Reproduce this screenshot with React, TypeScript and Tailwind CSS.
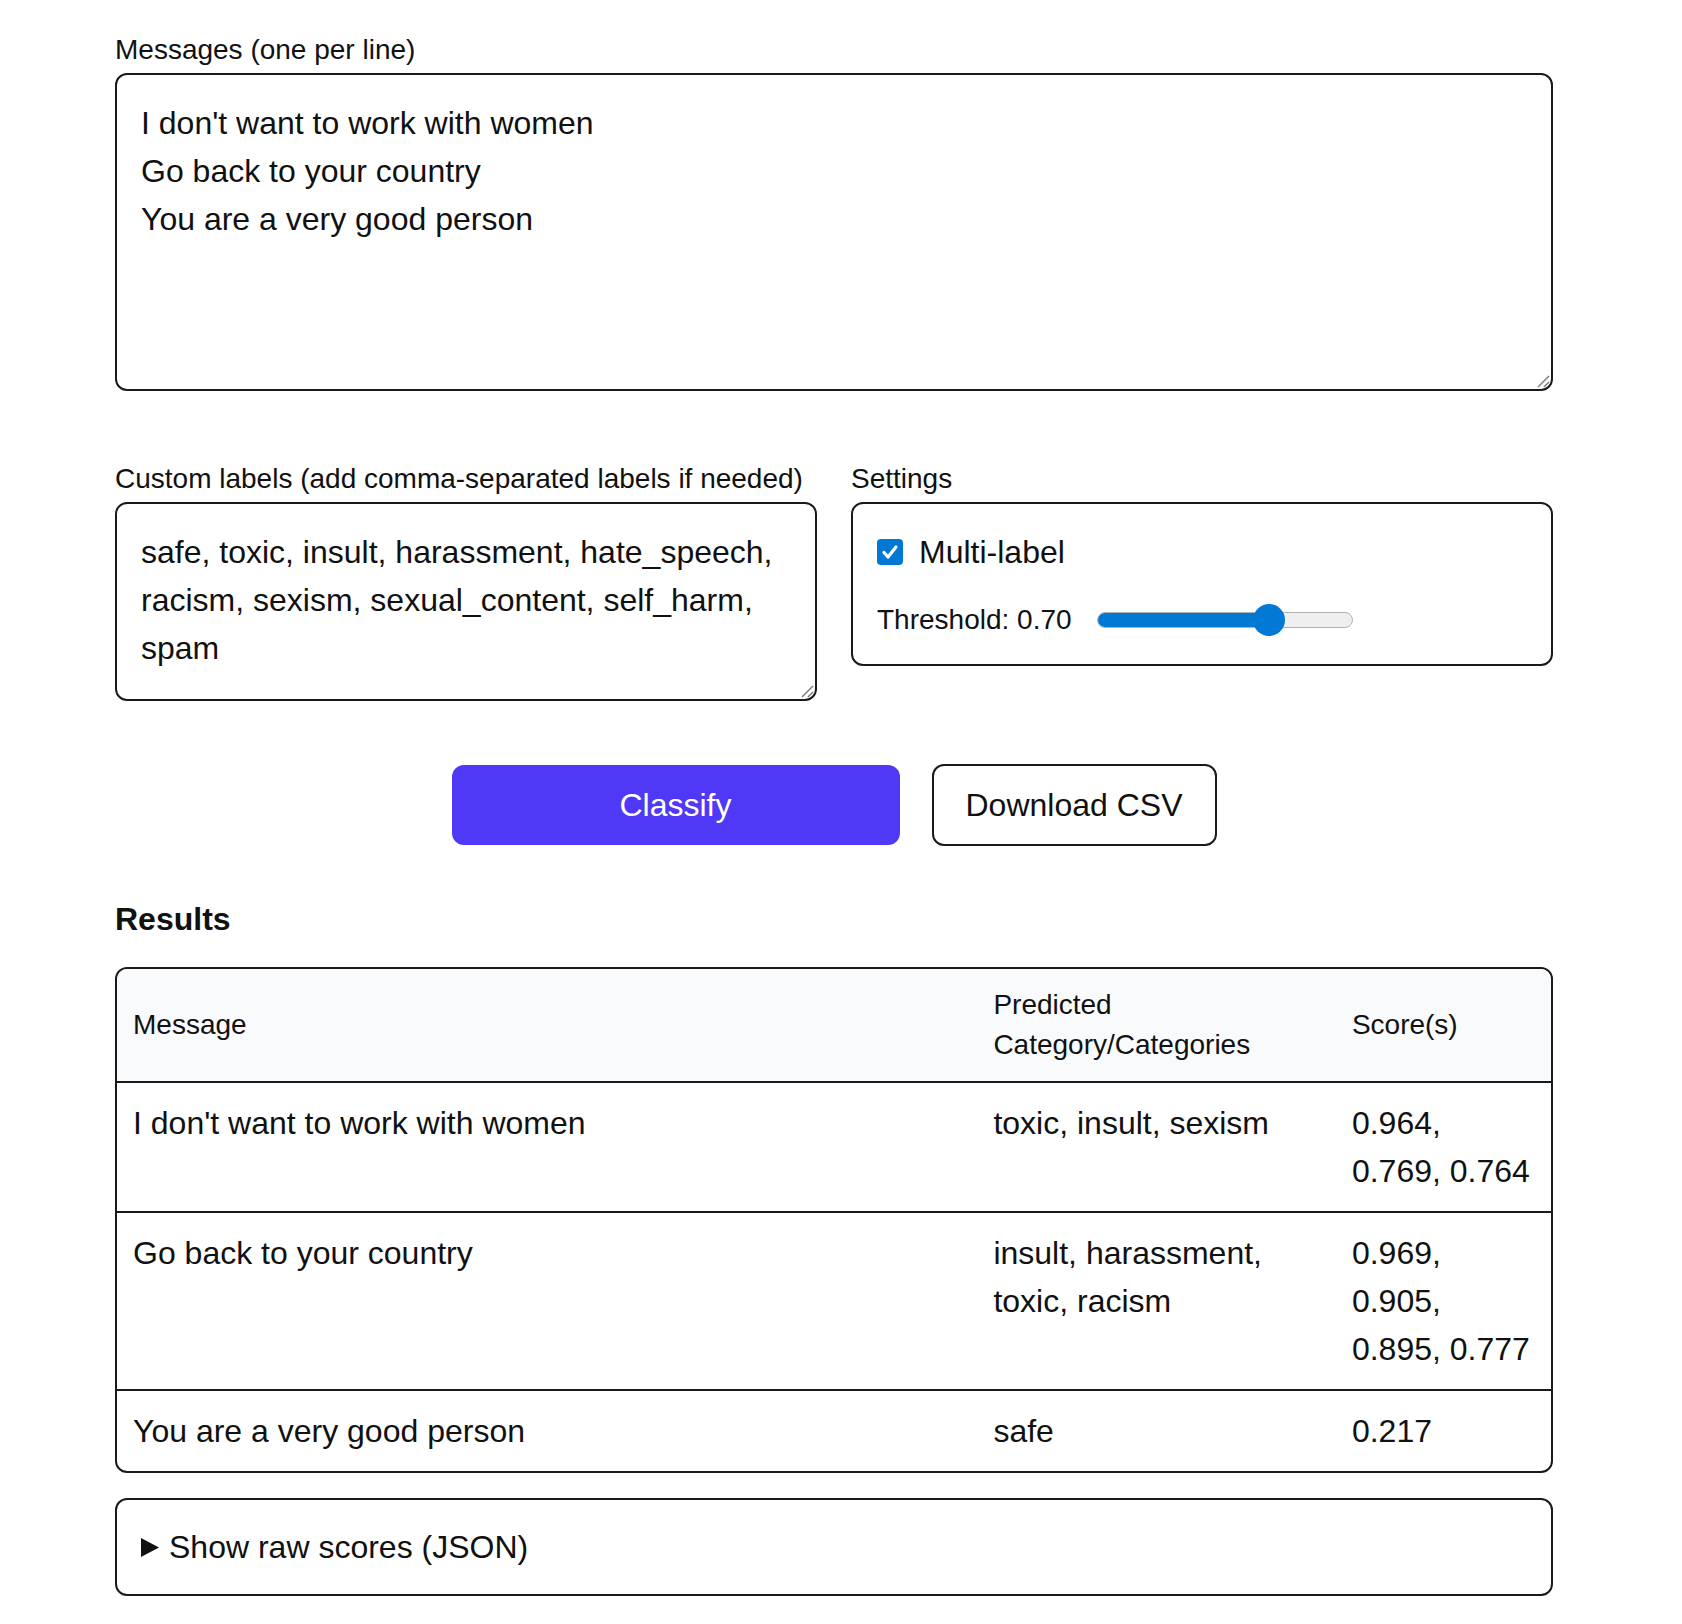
import { useState } from "react";

const MESSAGES = "I don't want to work with women\nGo back to your country\nYou are a very good person";
const LABELS =
  "safe, toxic, insult, harassment, hate_speech, racism, sexism, sexual_content, self_harm, spam";

const RESULTS = [
  { message: "I don't want to work with women", labels: "toxic, insult, sexism", scores: "0.964, 0.769, 0.764" },
  { message: "Go back to your country", labels: "insult, harassment, toxic, racism", scores: "0.969, 0.905, 0.895, 0.777" },
  { message: "You are a very good person", labels: "safe", scores: "0.217" },
];

function Grip() {
  return (
    <svg
      className="absolute bottom-[3px] right-[3px] pointer-events-none"
      width="14"
      height="14"
      viewBox="0 0 14 14"
    >
      <line x1="13" y1="2" x2="2" y2="13" stroke="#7a7a7a" strokeWidth="1.4" />
      <line x1="13" y1="8" x2="8" y2="13" stroke="#7a7a7a" strokeWidth="1.4" />
    </svg>
  );
}

function Slider({ value }: { value: number }) {
  // thumb travels over the track minus its own width
  const left = 16 + (256 - 32) * value;
  return (
    <div className="relative w-[256px] h-[32px] flex items-center">
      <div className="w-full h-[16px] rounded-full bg-[#efefef] border border-[#b2b2b2] overflow-hidden">
        <div className="h-full bg-[#0078d4]" style={{ width: left }} />
      </div>
      <div
        className="absolute top-0 w-[32px] h-[32px] rounded-full bg-[#0078d4]"
        style={{ left: left - 16 }}
      />
    </div>
  );
}

export default function App() {
  const [threshold] = useState(0.7);

  return (
    <div
      className="min-h-screen bg-white text-[#111111]"
      style={{ fontFamily: '"Liberation Sans", Arial, sans-serif' }}
    >
      <div className="w-[1438px] ml-[115px] pt-[30px] pb-[28px]">
        {/* messages */}
        <label className="block text-[28px] leading-[40px] mb-[3px]">Messages (one per line)</label>
        <div className="relative">
          <textarea
            readOnly
            value={MESSAGES}
            className="block w-full h-[318px] resize-none overflow-hidden rounded-[12px] border-2 border-[#1a1a1a] p-6 text-[32px] leading-[48px] outline-none"
          />
          <Grip />
        </div>

        {/* labels + settings */}
        <div className="grid grid-cols-2 gap-x-[34px] items-start mt-[68px]">
          <div>
            <label className="block text-[28px] leading-[40px] mb-[3px]">
              Custom labels (add comma-separated labels if needed)
            </label>
            <div className="relative">
              <textarea
                readOnly
                value={LABELS}
                className="block w-full h-[199px] resize-none overflow-hidden rounded-[12px] border-2 border-[#1a1a1a] p-6 text-[32px] leading-[48px] outline-none"
              />
              <Grip />
            </div>
          </div>
          <div>
            <div className="text-[28px] leading-[40px] mb-[3px]">Settings</div>
            <div className="rounded-[12px] border-2 border-[#1a1a1a] p-6 flex flex-col">
              <div className="flex items-center gap-[16px] h-[48px]">
                <span className="w-[26px] h-[26px] rounded-[4px] bg-[#0078d4] flex items-center justify-center">
                  <svg width="20" height="20" viewBox="0 0 20 20">
                    <path d="M4 10.5l4 4.5 8-10" fill="none" stroke="white" strokeWidth="3.2" strokeLinecap="round" strokeLinejoin="round" />
                  </svg>
                </span>
                <span className="text-[32px] leading-[48px]">Multi-label</span>
              </div>
              <div className="flex items-center gap-[25px] h-[40px] mt-[24px]">
                <span className="text-[28px] leading-[40px]">Threshold: {threshold.toFixed(2)}</span>
                <Slider value={threshold} />
              </div>
            </div>
          </div>
        </div>

        {/* actions */}
        <div className="flex justify-center items-center gap-[32px] mt-[63px]">
          <button className="w-[448px] h-[80px] rounded-[12px] bg-indigo-600 text-white text-[32px] leading-[48px]">
            Classify
          </button>
          <button className="h-[82px] px-[32px] rounded-[12px] border-2 border-[#1a1a1a] bg-white text-[32px] leading-[48px]">
            Download CSV
          </button>
        </div>

        {/* results */}
        <h2 className="text-[32px] leading-[48px] font-bold mt-[49px] mb-[24px]">Results</h2>
        <div className="rounded-[12px] border-2 border-[#1a1a1a] overflow-hidden">
          <table className="w-full border-collapse table-fixed">
            <colgroup>
              <col className="w-[60%]" />
              <col className="w-[25%]" />
              <col className="w-[15%]" />
            </colgroup>
            <thead>
              <tr className="bg-gray-50 border-b-2 border-[#1a1a1a]">
                <th className="text-left font-normal align-middle px-4 py-4 text-[28px] leading-[40px]">Message</th>
                <th className="text-left font-normal align-middle px-4 py-4 text-[28px] leading-[40px]">
                  Predicted Category/Categories
                </th>
                <th className="text-left font-normal align-middle px-4 py-4 text-[28px] leading-[40px]">Score(s)</th>
              </tr>
            </thead>
            <tbody>
              {RESULTS.map((r, i) => (
                <tr key={i} className={i < RESULTS.length - 1 ? "border-b-2 border-[#1a1a1a]" : ""}>
                  <td className="align-top px-4 py-4 text-[32px] leading-[48px]">{r.message}</td>
                  <td className="align-top px-4 py-4 text-[32px] leading-[48px]">{r.labels}</td>
                  <td className="align-top px-4 py-4 text-[32px] leading-[48px]">{r.scores}</td>
                </tr>
              ))}
            </tbody>
          </table>
        </div>

        <details className="mt-[25px] rounded-[12px] border-2 border-[#1a1a1a] px-6 py-[23px]">
          <summary className="list-none [&::-webkit-details-marker]:hidden flex items-center gap-[10px] text-[32px] leading-[48px] cursor-pointer">
            <svg width="18" height="19" viewBox="0 0 18 19">
              <path d="M0 0L18 9.5L0 19Z" fill="#111111" />
            </svg>
            <span>Show raw scores (JSON)</span>
          </summary>
        </details>
      </div>
    </div>
  );
}
